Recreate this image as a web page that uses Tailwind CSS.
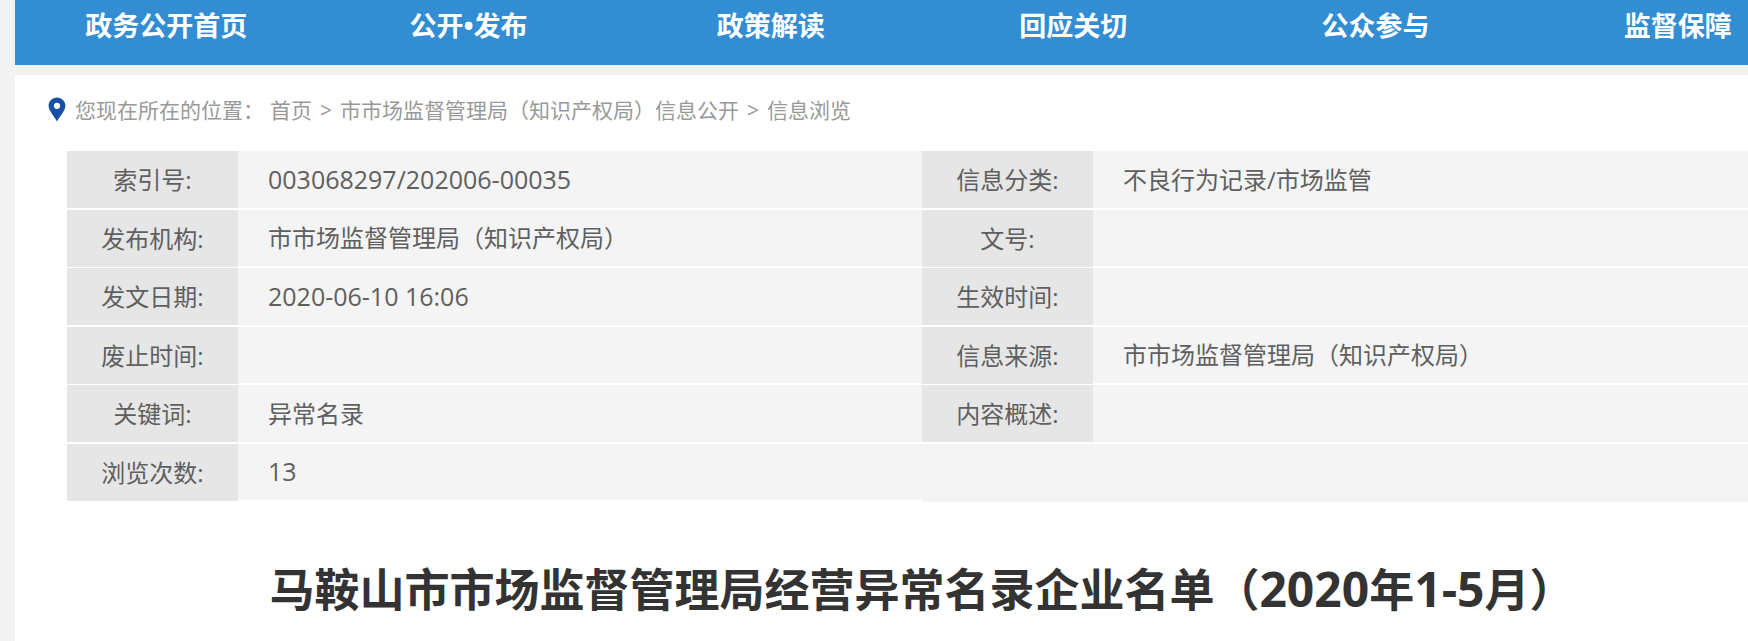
<!DOCTYPE html>
<html lang="zh-CN">
<head>
    <meta charset="UTF-8">
    <meta name="viewport" content="width=device-width, initial-scale=1.0">
    <title>马鞍山市市场监督管理局经营异常名录企业名单（2020年1-5月）</title>
    <!-- Tailwind CSS CDN -->
    <script src="https://cdn.jsdelivr.net/npm/@tailwindcss/browser@4"></script>
</head>
<body class="bg-[#f3f3f3] overflow-x-hidden min-h-screen flex flex-col font-['Open_Sans','Noto_Sans_CJK_SC',sans-serif]">
    <!-- Main Navigation -->
    <nav class="ml-[15px] -mr-[81px] bg-[#338dd2] grid grid-cols-6 pb-[13px] text-center text-[27px] leading-[52px] font-bold text-white">
        <a href="#">政务公开首页</a>
        <a href="#">公开•发布</a>
        <a href="#">政策解读</a>
        <a href="#">回应关切</a>
        <a href="#">公众参与</a>
        <a href="#">监督保障</a>
    </nav>

    <main class="ml-[15px] -mr-[81px] mt-[10px] flex-1 bg-white px-[52px]">
        <!-- Breadcrumb -->
        <div class="-ml-[19px] flex items-center h-[76px] pb-[6px] text-[21px] leading-[30px] text-[#999999]">
            <svg class="w-[18px] h-[26px] mr-[9px]" viewBox="0 0 18 26" fill="#174fa9" aria-hidden="true">
                <path fill-rule="evenodd" d="M9 .5C4.300.5.600 4.200.600 8.800C.600 13.600 5.800 18.800 9 24.500C12.200 18.800 17.400 13.600 17.400 8.800C17.400 4.200 13.700.5 9 .5ZM9 5.700A3.100 3.100 0 1 1 9 11.900A3.100 3.100 0 0 1 9 5.700Z"/>
            </svg>
            <span>您现在所在的位置：</span>
            <div class="ml-1.5 flex gap-2">
                <a href="#">首页</a>
                <span>&gt;</span>
                <a href="#">市市场监督管理局（知识产权局）信息公开</a>
                <span>&gt;</span>
                <a href="#">信息浏览</a>
            </div>
        </div>

        <!-- Document Info -->
        <table class="w-full table-fixed border-separate border-spacing-0 text-2xl text-[#5f5f5f] text-left [&_th]:bg-[#e6e6e6] [&_th]:text-center [&_th]:font-normal [&_td]:bg-[#f4f4f4] [&_td]:px-[30px] [&_th]:border-white [&_td]:border-white">
            <colgroup>
                <col class="w-[10%]">
                <col class="w-[40%]">
                <col class="w-[10%]">
                <col class="w-[40%]">
            </colgroup>
            <tbody>
                <tr class="h-[59px]">
                    <th scope="row" class="border-b-2">索引号:</th>
                    <td class="border-b-2 text-[25px]">003068297/202006-00035</td>
                    <th scope="row" class="border-b-2">信息分类:</th>
                    <td class="border-b-2">不良行为记录/市场监管</td>
                </tr>
                <tr class="h-[58px]">
                    <th scope="row" class="border-b">发布机构:</th>
                    <td class="border-b-2">市市场监督管理局（知识产权局）</td>
                    <th scope="row" class="border-b">文号:</th>
                    <td class="border-b-2"></td>
                </tr>
                <tr class="h-[59px]">
                    <th scope="row" class="border-b-2">发文日期:</th>
                    <td class="border-b-2 text-[25px]">2020-06-10 16:06</td>
                    <th scope="row" class="border-b-2">生效时间:</th>
                    <td class="border-b-2"></td>
                </tr>
                <tr class="h-[58px]">
                    <th scope="row" class="border-b">废止时间:</th>
                    <td class="border-b-2"></td>
                    <th scope="row" class="border-b">信息来源:</th>
                    <td class="border-b-2">市市场监督管理局（知识产权局）</td>
                </tr>
                <tr class="h-[59px]">
                    <th scope="row" class="border-b-2">关键词:</th>
                    <td class="border-b-2">异常名录</td>
                    <th scope="row" class="border-b-2">内容概述:</th>
                    <td class="border-b-2"></td>
                </tr>
                <tr class="h-[58px]">
                    <th scope="row" class="border-b">浏览次数:</th>
                    <td class="border-b-2 text-[25px]">13</td>
                    <td colspan="2"></td>
                </tr>
            </tbody>
        </table>

        <!-- Article Title -->
        <h1 class="mt-[52px] pb-5 text-center text-[45px] leading-[70px] font-bold text-[#333333]">马鞍山市市场监督管理局经营异常名录企业名单（<span class="text-5xl leading-[70px]">2020</span>年<span class="text-5xl leading-[70px]">1-5</span>月）</h1>
    </main>
</body>
</html>
